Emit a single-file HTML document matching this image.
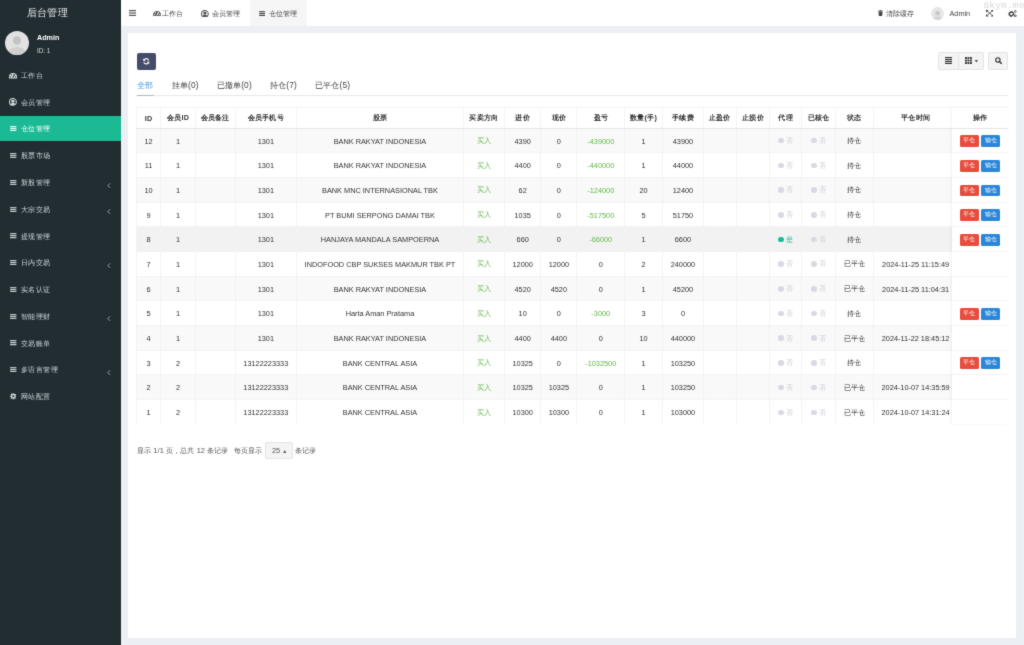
<!DOCTYPE html>
<html><head><meta charset="utf-8">
<style>
*{box-sizing:border-box;margin:0;padding:0}
html,body{width:1024px;height:645px;overflow:hidden;background:#ecf0f5;font-family:"Liberation Sans",sans-serif;color:#333}
body{filter:url(#soft)}
#sb{position:absolute;left:0;top:0;width:121px;height:645px;background:#222d32}
#logo{position:absolute;left:26.6px;top:5.3px;font-size:10.2px;letter-spacing:0.35px;line-height:16px;color:#e8ecee;white-space:nowrap}
#avatar{position:absolute;left:5px;top:31px;width:24px;height:24px;border-radius:50%;background:#e2e2e2;overflow:hidden}
#uname{position:absolute;left:37px;top:33px;font-size:7.2px;font-weight:bold;color:#fff;line-height:10px}
#uid{position:absolute;left:37px;top:45.5px;font-size:6.3px;color:#d5dadd;line-height:9px}
.mi{position:absolute;left:0;width:121px;height:25px;line-height:25px;font-size:7.4px;letter-spacing:0.4px;color:#d0d7da;white-space:nowrap}
.mi i{position:absolute;line-height:0}
.ht i{position:absolute;line-height:0}
.mi .tx{position:absolute;left:21px;top:0}
.mi .ar{position:absolute;left:107.3px;top:12.5px}
.mi.act{background:#1bb994;color:#fff}
#hd{position:absolute;left:121px;top:0;width:903px;height:26px;background:#fff}
.ht{position:absolute;top:0;height:26px;line-height:27.2px;font-size:7.3px;color:#444;white-space:nowrap}
.ht svg{position:absolute}
#panel{position:absolute;left:128px;top:33px;width:888px;height:605px;background:#fff}
.btn{position:absolute;background:#f4f4f4;border:1px solid #e4e4e4}
#refresh{position:absolute;left:137px;top:52.5px;width:19px;height:17.5px;background:#444c69;border-radius:2px}
.tab{position:absolute;top:79px;font-size:8.4px;letter-spacing:0.15px;line-height:13px;color:#444;white-space:nowrap}
#tabline{position:absolute;left:136px;top:95px;width:872px;height:1px;background:#e9e9e9}
#tabact{position:absolute;left:136.5px;top:94.8px;width:17px;height:1.6px;background:#aabdb3}
table{position:absolute;left:135.65px;top:106.5px;border-collapse:collapse;table-layout:fixed;width:872px}
td,th{text-align:center;font-size:7.35px;color:#333;white-space:nowrap;overflow:hidden;border-left:1px solid #f3f3f3;padding:0}
th{height:21px;font-weight:bold;font-size:7.2px;letter-spacing:0.25px;border-bottom:1.5px solid #e5e5e5;background:#fff;padding-top:1.6px;border-top:1px solid #f5f5f5}
td{height:24.68px;border-top:1px solid #f4f4f4;padding-top:1.6px}
tbody tr:nth-child(odd) td{background:#f9f9f9}
td.g{color:#62b84a}
td.tm{text-align:center}
.dot{display:inline-block;width:5.6px;height:5.6px;border-radius:50%;background:#d9d9e4;vertical-align:middle;margin-right:2px;position:relative;top:-0.5px}
.dot.on{background:#18bc9c}
.no{color:#d0d0d8}
.yes{color:#18bc9c}
.bt{display:inline-block;width:19px;height:11.7px;line-height:11.7px;font-size:5.6px;color:#fff;border-radius:1.5px;vertical-align:middle}
.bt.r{background:#e74c3c;margin-right:2.5px}
.bt.b{background:#2a86d9}
#fx{position:absolute;left:951.5px;top:106.5px;width:56.5px;border-collapse:collapse;table-layout:fixed;box-shadow:-1px 0 3px rgba(0,0,0,0.06)}
#fx th,#fx td{border-left:none}
#fx tbody tr td{background:#fff !important}
#main tbody tr:nth-child(5) td{background:#f2f2f2}
.pg{position:absolute;top:444.5px;font-size:7.4px;letter-spacing:0.1px;line-height:12px;color:#555;white-space:nowrap}
</style></head><body><svg width="0" height="0" style="position:absolute"><filter id="soft" x="0" y="0" width="100%" height="100%" color-interpolation-filters="sRGB"><feConvolveMatrix order="3" kernelMatrix="0.02 0.08 0.02 0.08 0.6 0.08 0.02 0.08 0.02" edgeMode="duplicate"/></filter></svg>
<div id="sb">
  <div id="logo">后台管理</div>
  <div id="avatar"><svg width="24" height="24" viewBox="0 0 24 24"><circle cx="12" cy="9.5" r="4.2" fill="#c4c4c4"/><ellipse cx="12" cy="22" rx="8.5" ry="6" fill="#cfcfcf"/></svg></div>
  <div id="uname">Admin</div>
  <div id="uid">ID: 1</div>
  <div class="mi" style="top:63px"><i style="left:9px;top:10px"><svg width="8" height="5.5" viewBox="0 0 16 11"><path d="M8 0A8 8 0 0 0 0 8v3h16V8A8 8 0 0 0 8 0z" fill="currentColor"/><circle cx="3.2" cy="7.6" r="1.3" fill="#222d32"/><circle cx="4.8" cy="3.6" r="1.3" fill="#222d32"/><circle cx="11.2" cy="3.6" r="1.3" fill="#222d32"/><circle cx="12.8" cy="7.6" r="1.3" fill="#222d32"/><path d="M8 9.6L10.3 2.6" stroke="#222d32" stroke-width="1.8"/></svg></i><span class="tx">工作台</span></div>
  <div class="mi" style="top:89.75px"><i style="left:9px;top:8.6px"><svg width="7.9" height="7.9" viewBox="0 0 14 14"><circle cx="7" cy="7" r="6" fill="none" stroke="currentColor" stroke-width="1.9"/><circle cx="7" cy="5.6" r="2.9" fill="currentColor"/><path d="M2.4 11.2C3.4 9.3 5 8.7 7 8.7s3.6.6 4.6 2.5L9.5 12.6H4.5z" fill="currentColor"/></svg></i><span class="tx">会员管理</span></div>
  <div class="mi act" style="top:116px"><i style="left:10px;top:9.8px"><svg width="6.5" height="5.4" viewBox="0 0 14 12"><rect x="0" y="0.3" width="14" height="2.6" fill="currentColor"/><rect x="0" y="4.7" width="14" height="2.6" fill="currentColor"/><rect x="0" y="9.1" width="14" height="2.6" fill="currentColor"/></svg></i><span class="tx">仓位管理</span></div>
  <div class="mi" style="top:143.25px"><i style="left:10px;top:9.8px"><svg width="6.5" height="5.4" viewBox="0 0 14 12"><rect x="0" y="0.3" width="14" height="2.6" fill="currentColor"/><rect x="0" y="4.7" width="14" height="2.6" fill="currentColor"/><rect x="0" y="9.1" width="14" height="2.6" fill="currentColor"/></svg></i><span class="tx">股票市场</span></div>
  <div class="mi" style="top:170px"><i style="left:10px;top:9.8px"><svg width="6.5" height="5.4" viewBox="0 0 14 12"><rect x="0" y="0.3" width="14" height="2.6" fill="currentColor"/><rect x="0" y="4.7" width="14" height="2.6" fill="currentColor"/><rect x="0" y="9.1" width="14" height="2.6" fill="currentColor"/></svg></i><span class="tx">新股管理</span><svg class="ar" width="3.6" height="5.2" viewBox="0 0 7 10"><path d="M5.8 0.8L1.6 5l4.2 4.2" fill="none" stroke="#aab4b9" stroke-width="1.7"/></svg></div>
  <div class="mi" style="top:196.75px"><i style="left:10px;top:9.8px"><svg width="6.5" height="5.4" viewBox="0 0 14 12"><rect x="0" y="0.3" width="14" height="2.6" fill="currentColor"/><rect x="0" y="4.7" width="14" height="2.6" fill="currentColor"/><rect x="0" y="9.1" width="14" height="2.6" fill="currentColor"/></svg></i><span class="tx">大宗交易</span><svg class="ar" width="3.6" height="5.2" viewBox="0 0 7 10"><path d="M5.8 0.8L1.6 5l4.2 4.2" fill="none" stroke="#aab4b9" stroke-width="1.7"/></svg></div>
  <div class="mi" style="top:223.5px"><i style="left:10px;top:9.8px"><svg width="6.5" height="5.4" viewBox="0 0 14 12"><rect x="0" y="0.3" width="14" height="2.6" fill="currentColor"/><rect x="0" y="4.7" width="14" height="2.6" fill="currentColor"/><rect x="0" y="9.1" width="14" height="2.6" fill="currentColor"/></svg></i><span class="tx">提现管理</span></div>
  <div class="mi" style="top:250.25px"><i style="left:10px;top:9.8px"><svg width="6.5" height="5.4" viewBox="0 0 14 12"><rect x="0" y="0.3" width="14" height="2.6" fill="currentColor"/><rect x="0" y="4.7" width="14" height="2.6" fill="currentColor"/><rect x="0" y="9.1" width="14" height="2.6" fill="currentColor"/></svg></i><span class="tx">日内交易</span><svg class="ar" width="3.6" height="5.2" viewBox="0 0 7 10"><path d="M5.8 0.8L1.6 5l4.2 4.2" fill="none" stroke="#aab4b9" stroke-width="1.7"/></svg></div>
  <div class="mi" style="top:277px"><i style="left:10px;top:9.8px"><svg width="6.5" height="5.4" viewBox="0 0 14 12"><rect x="0" y="0.3" width="14" height="2.6" fill="currentColor"/><rect x="0" y="4.7" width="14" height="2.6" fill="currentColor"/><rect x="0" y="9.1" width="14" height="2.6" fill="currentColor"/></svg></i><span class="tx">实名认证</span></div>
  <div class="mi" style="top:303.75px"><i style="left:10px;top:9.8px"><svg width="6.5" height="5.4" viewBox="0 0 14 12"><rect x="0" y="0.3" width="14" height="2.6" fill="currentColor"/><rect x="0" y="4.7" width="14" height="2.6" fill="currentColor"/><rect x="0" y="9.1" width="14" height="2.6" fill="currentColor"/></svg></i><span class="tx">智能理财</span><svg class="ar" width="3.6" height="5.2" viewBox="0 0 7 10"><path d="M5.8 0.8L1.6 5l4.2 4.2" fill="none" stroke="#aab4b9" stroke-width="1.7"/></svg></div>
  <div class="mi" style="top:330.5px"><i style="left:10px;top:9.8px"><svg width="6.5" height="5.4" viewBox="0 0 14 12"><rect x="0" y="0.3" width="14" height="2.6" fill="currentColor"/><rect x="0" y="4.7" width="14" height="2.6" fill="currentColor"/><rect x="0" y="9.1" width="14" height="2.6" fill="currentColor"/></svg></i><span class="tx">交易账单</span></div>
  <div class="mi" style="top:357.25px"><i style="left:10px;top:9.8px"><svg width="6.5" height="5.4" viewBox="0 0 14 12"><rect x="0" y="0.3" width="14" height="2.6" fill="currentColor"/><rect x="0" y="4.7" width="14" height="2.6" fill="currentColor"/><rect x="0" y="9.1" width="14" height="2.6" fill="currentColor"/></svg></i><span class="tx">多语言管理</span><svg class="ar" width="3.6" height="5.2" viewBox="0 0 7 10"><path d="M5.8 0.8L1.6 5l4.2 4.2" fill="none" stroke="#aab4b9" stroke-width="1.7"/></svg></div>
  <div class="mi" style="top:384px"><i style="left:9.5px;top:9.2px"><svg width="6.5" height="6.5" viewBox="0 0 14 14"><path d="M6 0h2l.4 2.1 1.5.6 1.8-1.2 1.4 1.4-1.2 1.8.6 1.5L14 6v2l-2.1.4-.6 1.5 1.2 1.8-1.4 1.4-1.8-1.2-1.5.6L8 14H6l-.4-2.1-1.5-.6-1.8 1.2-1.4-1.4 1.2-1.8-.6-1.5L0 8V6l2.1-.4.6-1.5-1.2-1.8 1.4-1.4 1.8 1.2 1.5-.6z" fill="currentColor"/><circle cx="7" cy="7" r="2.3" fill="#222d32"/></svg></i><span class="tx">网站配置</span></div>
</div>
<div id="hd">
  <div class="ht" style="left:8px;color:#555"><i style="left:0;top:10.2px"><svg width="7.2" height="6" viewBox="0 0 7.2 6"><rect x="0" y="0" width="7.2" height="1.2" fill="currentColor"/><rect x="0" y="2.4" width="7.2" height="1.2" fill="currentColor"/><rect x="0" y="4.8" width="7.2" height="1.2" fill="currentColor"/></svg></i></div>
  <div class="ht" style="left:32px;color:#555"><i style="left:0;top:11px"><svg width="8" height="5.3" viewBox="0 0 16 11"><path d="M8 0A8 8 0 0 0 0 8v3h16V8A8 8 0 0 0 8 0z" fill="currentColor"/><circle cx="3.2" cy="7.6" r="1.3" fill="#fff"/><circle cx="4.8" cy="3.6" r="1.3" fill="#fff"/><circle cx="11.2" cy="3.6" r="1.3" fill="#fff"/><circle cx="12.8" cy="7.6" r="1.3" fill="#fff"/><path d="M8 9.6L10.3 2.6" stroke="#fff" stroke-width="1.8"/></svg></i></div>
  <div class="ht" style="left:41px">工作台</div>
  <div class="ht" style="left:80px;color:#555"><i style="left:0;top:9.6px"><svg width="7.8" height="7.8" viewBox="0 0 14 14"><circle cx="7" cy="7" r="6" fill="none" stroke="currentColor" stroke-width="1.9"/><circle cx="7" cy="5.6" r="2.9" fill="currentColor"/><path d="M2.4 11.2C3.4 9.3 5 8.7 7 8.7s3.6.6 4.6 2.5L9.5 12.6H4.5z" fill="currentColor"/></svg></i></div>
  <div class="ht" style="left:91px">会员管理</div>
  <div class="ht" style="left:129px;width:56.5px;background:#f6f6f6;padding-left:19px"><i style="left:9px;top:10.6px"><svg width="6.4" height="5.2" viewBox="0 0 14 12"><rect x="0" y="0.3" width="14" height="2.6" fill="currentColor"/><rect x="0" y="4.7" width="14" height="2.6" fill="currentColor"/><rect x="0" y="9.1" width="14" height="2.6" fill="currentColor"/></svg></i>仓位管理</div>
  <div class="ht" style="left:757px;color:#444"><i style="left:0;top:10px"><svg width="5" height="6.4" viewBox="0 0 10 13"><rect x="0" y="1.5" width="10" height="1.8" fill="currentColor"/><rect x="3.5" y="0" width="3" height="2" fill="currentColor"/><path d="M1 4h8l-.7 9H1.7z" fill="currentColor"/></svg></i></div>
  <div class="ht" style="left:765px">清除缓存</div>
  <div style="position:absolute;left:809.5px;top:7.2px;width:13.2px;height:13.2px;border-radius:50%;background:#e6e6e6;overflow:hidden"><svg width="13.2" height="13.2" viewBox="0 0 14 14"><circle cx="7" cy="5.6" r="2.6" fill="#c9c9c9"/><ellipse cx="7" cy="13" rx="5" ry="3.6" fill="#d2d2d2"/></svg></div>
  <div class="ht" style="left:828.5px">Admin</div>
  <div class="ht" style="left:865px;color:#444"><i style="left:0;top:10px"><svg width="7.4" height="6.5" viewBox="0 0 14 12.4"><g fill="currentColor"><path d="M0 0h5L0 4.6z"/><path d="M14 0H9l5 4.6z"/><path d="M0 12.4h5L0 7.8z"/><path d="M14 12.4H9l5-4.6z"/></g><path d="M2 1.8L12 10.6M12 1.8L2 10.6" stroke="currentColor" stroke-width="1.6"/></svg></i></div>
  <div class="ht" style="left:887px;color:#444"><i style="left:-0.5px;top:9.6px"><svg width="9" height="7.3" viewBox="0 0 16 13"><path d="M6 7m-3.6 0a3.6 3.6 0 1 0 7.2 0a3.6 3.6 0 1 0-7.2 0" fill="none" stroke="currentColor" stroke-width="2.6"/><g fill="currentColor"><rect x="5.1" y="1.8" width="1.8" height="2"/><rect x="5.1" y="10.2" width="1.8" height="2"/><rect x="0.8" y="6.1" width="2" height="1.8"/><rect x="9.2" y="6.1" width="2" height="1.8"/></g><circle cx="13" cy="2.6" r="1.6" fill="none" stroke="currentColor" stroke-width="1.5"/><circle cx="13" cy="10.4" r="1.7" fill="none" stroke="currentColor" stroke-width="1.7"/></svg></i></div>
  <div style="position:absolute;left:862.5px;top:0.6px;font-family:'Liberation Mono',monospace;font-size:9.6px;line-height:10px;color:#d9d9d9;letter-spacing:0.1px;white-space:nowrap">8kym.me</div>
</div>
<div id="panel"></div>
<div id="refresh"><svg style="position:absolute;left:6px;top:5.5px" width="6.5" height="6.5" viewBox="0 0 14 14"><path d="M12.3 5.2A5.5 5.5 0 0 0 2.3 4" fill="none" stroke="#fff" stroke-width="2.3"/><path d="M0.6 1.2v5.2h5.2z" fill="#fff"/><path d="M1.7 8.8A5.5 5.5 0 0 0 11.7 10" fill="none" stroke="#fff" stroke-width="2.3"/><path d="M13.4 12.8V7.6H8.2z" fill="#fff"/></svg></div>
<div class="btn" style="left:938px;top:52px;width:20.5px;height:17.5px;border-radius:2px 0 0 2px"><svg style="position:absolute;left:6.1px;top:3.8px" width="7.2" height="7" viewBox="0 0 7.2 7"><g fill="#333"><rect y="0" width="7.2" height="1.15"/><rect y="1.95" width="7.2" height="1.15"/><rect y="3.9" width="7.2" height="1.15"/><rect y="5.85" width="7.2" height="1.15"/></g></svg></div>
<div class="btn" style="left:957.5px;top:52px;width:26.5px;height:17.5px;border-radius:0 2px 2px 0"><svg style="position:absolute;left:6.6px;top:3.8px" width="14" height="7" viewBox="0 0 14 7"><g fill="#333"><rect x="0" y="0" width="1.9" height="1.9"/><rect x="2.5" y="0" width="1.9" height="1.9"/><rect x="5" y="0" width="1.9" height="1.9"/><rect x="0" y="2.55" width="1.9" height="1.9"/><rect x="2.5" y="2.55" width="1.9" height="1.9"/><rect x="5" y="2.55" width="1.9" height="1.9"/><rect x="0" y="5.1" width="1.9" height="1.9"/><rect x="2.5" y="5.1" width="1.9" height="1.9"/><rect x="5" y="5.1" width="1.9" height="1.9"/><path d="M9.6 3.3h3.6l-1.8 1.9z"/></g></svg></div>
<div class="btn" style="left:987.5px;top:52px;width:20.5px;height:17.5px;border-radius:2px"><svg style="position:absolute;left:6.2px;top:3.5px" width="7" height="7" viewBox="0 0 14 14"><circle cx="5.8" cy="5.8" r="4.3" fill="none" stroke="#333" stroke-width="2.3"/><path d="M8.8 8.8l4 4" stroke="#333" stroke-width="2.8" stroke-linecap="round"/></svg></div>
<div class="tab" style="left:136.6px;color:#4e9fd9">全部</div>
<div class="tab" style="left:171.7px">挂单(0)</div>
<div class="tab" style="left:216.7px">已撤单(0)</div>
<div class="tab" style="left:270px">持仓(7)</div>
<div class="tab" style="left:315px">已平仓(5)</div>
<div id="tabline"></div>
<div id="tabact"></div>
<table id="main">
<colgroup><col style="width:24.7px"><col style="width:34.6px"><col style="width:39.6px"><col style="width:61.6px"><col style="width:166.7px"><col style="width:41.3px"><col style="width:36.2px"><col style="width:36.2px"><col style="width:47.6px"><col style="width:38.1px"><col style="width:40.6px"><col style="width:33px"><col style="width:33.7px"><col style="width:31.5px"><col style="width:33.9px"><col style="width:38.1px"><col style="width:84.4px"><col style="width:50.1px"></colgroup>
<thead><tr><th>ID</th><th>会员ID</th><th>会员备注</th><th>会员手机号</th><th>股票</th><th>买卖方向</th><th>进价</th><th>现价</th><th>盈亏</th><th>数量(手)</th><th>手续费</th><th>止盈价</th><th>止损价</th><th>代理</th><th>已核仓</th><th>状态</th><th>平仓时间</th><th>操作</th></tr></thead>
<tbody>
<tr><td>12</td><td>1</td><td></td><td>1301</td><td>BANK RAKYAT INDONESIA</td><td class="g">买入</td><td>4390</td><td>0</td><td class="g">-439000</td><td>1</td><td>43900</td><td></td><td></td><td><span class="dot"></span><span class="no">否</span></td><td><span class="dot"></span><span class="no">否</span></td><td>持仓</td><td class="tm"></td><td><span class="bt r">平仓</span><span class="bt b">输仓</span></td></tr>
<tr><td>11</td><td>1</td><td></td><td>1301</td><td>BANK RAKYAT INDONESIA</td><td class="g">买入</td><td>4400</td><td>0</td><td class="g">-440000</td><td>1</td><td>44000</td><td></td><td></td><td><span class="dot"></span><span class="no">否</span></td><td><span class="dot"></span><span class="no">否</span></td><td>持仓</td><td class="tm"></td><td><span class="bt r">平仓</span><span class="bt b">输仓</span></td></tr>
<tr><td>10</td><td>1</td><td></td><td>1301</td><td>BANK MNC INTERNASIONAL TBK</td><td class="g">买入</td><td>62</td><td>0</td><td class="g">-124000</td><td>20</td><td>12400</td><td></td><td></td><td><span class="dot"></span><span class="no">否</span></td><td><span class="dot"></span><span class="no">否</span></td><td>持仓</td><td class="tm"></td><td><span class="bt r">平仓</span><span class="bt b">输仓</span></td></tr>
<tr><td>9</td><td>1</td><td></td><td>1301</td><td>PT BUMI SERPONG DAMAI TBK</td><td class="g">买入</td><td>1035</td><td>0</td><td class="g">-517500</td><td>5</td><td>51750</td><td></td><td></td><td><span class="dot"></span><span class="no">否</span></td><td><span class="dot"></span><span class="no">否</span></td><td>持仓</td><td class="tm"></td><td><span class="bt r">平仓</span><span class="bt b">输仓</span></td></tr>
<tr><td>8</td><td>1</td><td></td><td>1301</td><td>HANJAYA MANDALA SAMPOERNA</td><td class="g">买入</td><td>660</td><td>0</td><td class="g">-66000</td><td>1</td><td>6600</td><td></td><td></td><td><span class="dot on"></span><span class="yes">是</span></td><td><span class="dot"></span><span class="no">否</span></td><td>持仓</td><td class="tm"></td><td><span class="bt r">平仓</span><span class="bt b">输仓</span></td></tr>
<tr><td>7</td><td>1</td><td></td><td>1301</td><td>INDOFOOD CBP SUKSES MAKMUR TBK PT</td><td class="g">买入</td><td>12000</td><td>12000</td><td>0</td><td>2</td><td>240000</td><td></td><td></td><td><span class="dot"></span><span class="no">否</span></td><td><span class="dot"></span><span class="no">否</span></td><td>已平仓</td><td class="tm">2024-11-25 11:15:49</td><td></td></tr>
<tr><td>6</td><td>1</td><td></td><td>1301</td><td>BANK RAKYAT INDONESIA</td><td class="g">买入</td><td>4520</td><td>4520</td><td>0</td><td>1</td><td>45200</td><td></td><td></td><td><span class="dot"></span><span class="no">否</span></td><td><span class="dot"></span><span class="no">否</span></td><td>已平仓</td><td class="tm">2024-11-25 11:04:31</td><td></td></tr>
<tr><td>5</td><td>1</td><td></td><td>1301</td><td>Harta Aman Pratama</td><td class="g">买入</td><td>10</td><td>0</td><td class="g">-3000</td><td>3</td><td>0</td><td></td><td></td><td><span class="dot"></span><span class="no">否</span></td><td><span class="dot"></span><span class="no">否</span></td><td>持仓</td><td class="tm"></td><td><span class="bt r">平仓</span><span class="bt b">输仓</span></td></tr>
<tr><td>4</td><td>1</td><td></td><td>1301</td><td>BANK RAKYAT INDONESIA</td><td class="g">买入</td><td>4400</td><td>4400</td><td>0</td><td>10</td><td>440000</td><td></td><td></td><td><span class="dot"></span><span class="no">否</span></td><td><span class="dot"></span><span class="no">否</span></td><td>已平仓</td><td class="tm">2024-11-22 18:45:12</td><td></td></tr>
<tr><td>3</td><td>2</td><td></td><td>13122223333</td><td>BANK CENTRAL ASIA</td><td class="g">买入</td><td>10325</td><td>0</td><td class="g">-1032500</td><td>1</td><td>103250</td><td></td><td></td><td><span class="dot"></span><span class="no">否</span></td><td><span class="dot"></span><span class="no">否</span></td><td>持仓</td><td class="tm"></td><td><span class="bt r">平仓</span><span class="bt b">输仓</span></td></tr>
<tr><td>2</td><td>2</td><td></td><td>13122223333</td><td>BANK CENTRAL ASIA</td><td class="g">买入</td><td>10325</td><td>10325</td><td>0</td><td>1</td><td>103250</td><td></td><td></td><td><span class="dot"></span><span class="no">否</span></td><td><span class="dot"></span><span class="no">否</span></td><td>已平仓</td><td class="tm">2024-10-07 14:35:59</td><td></td></tr>
<tr><td>1</td><td>2</td><td></td><td>13122223333</td><td>BANK CENTRAL ASIA</td><td class="g">买入</td><td>10300</td><td>10300</td><td>0</td><td>1</td><td>103000</td><td></td><td></td><td><span class="dot"></span><span class="no">否</span></td><td><span class="dot"></span><span class="no">否</span></td><td>已平仓</td><td class="tm">2024-10-07 14:31:24</td><td></td></tr>
</tbody></table>
<table id="fx"><thead><tr><th>操作</th></tr></thead><tbody>
<tr><td><span class="bt r">平仓</span><span class="bt b">输仓</span></td></tr>
<tr><td><span class="bt r">平仓</span><span class="bt b">输仓</span></td></tr>
<tr><td><span class="bt r">平仓</span><span class="bt b">输仓</span></td></tr>
<tr><td><span class="bt r">平仓</span><span class="bt b">输仓</span></td></tr>
<tr><td><span class="bt r">平仓</span><span class="bt b">输仓</span></td></tr>
<tr><td></td></tr>
<tr><td></td></tr>
<tr><td><span class="bt r">平仓</span><span class="bt b">输仓</span></td></tr>
<tr><td></td></tr>
<tr><td><span class="bt r">平仓</span><span class="bt b">输仓</span></td></tr>
<tr><td></td></tr>
<tr><td></td></tr>
</tbody></table>
<div class="pg" style="left:137px">显示 1/1 页，总共 12 条记录</div>
<div class="pg" style="left:234px">每页显示</div>
<div class="btn" style="left:265px;top:442px;width:28px;height:17px;border-radius:2px;font-size:7.35px;line-height:15px;color:#555;padding-left:6px">25 <span style="font-size:5px">▲</span></div>
<div class="pg" style="left:295px">条记录</div>
</body></html>
